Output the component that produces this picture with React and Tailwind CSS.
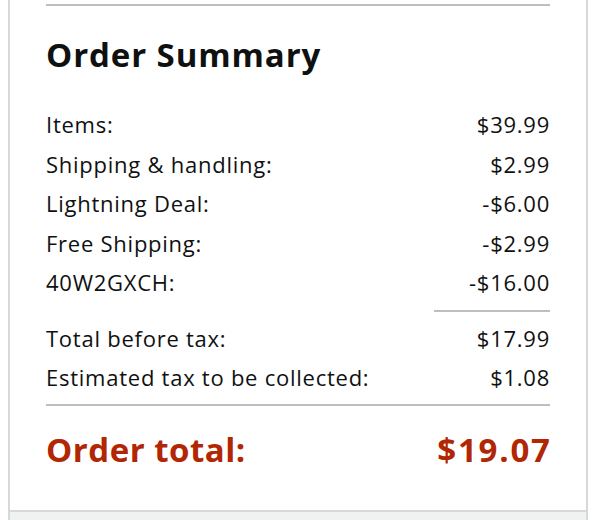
export default function App() {
  const rows1 = [
    ["Items:", "$39.99"],
    ["Shipping & handling:", "$2.99"],
    ["Lightning Deal:", "-$6.00"],
    ["Free Shipping:", "-$2.99"],
    ["40W2GXCH:", "-$16.00"],
  ];
  const rows2 = [
    ["Total before tax:", "$17.99"],
    ["Estimated tax to be collected:", "$1.08"],
  ];
  return (
    <div className="w-[600px] h-[520px] bg-white overflow-hidden text-[#0f1111]" style={{ fontFamily: '"Open Sans", "Noto Sans", sans-serif' }}>
      <div className="ml-[8px] w-[580px] h-[520px] border-x-2 border-[#d5d9d9] flex flex-col">
        <div className="px-[36px] pt-[4px] flex flex-col h-[510px]">
          <div className="border-t-2 border-[#bbbfbf]" />
          <div className="h-[100px] flex items-center pb-[4px]">
            <h2 className="text-[33px] font-bold leading-none tracking-[0.9px]">Order Summary</h2>
          </div>
          {rows1.map(([l, v]) => (
            <div key={l} className="h-[39.5px] flex items-center justify-between text-[22px] leading-none tracking-[0.75px] pb-[3px]">
              <span>{l}</span>
              <span>{v}</span>
            </div>
          ))}
          <div className="flex justify-end mt-[6.5px]">
            <div className="w-[116px] border-t-2 border-[#bbbfbf]" />
          </div>
          <div className="mt-[7.25px]">
            {rows2.map(([l, v]) => (
              <div key={l} className="h-[39.5px] flex items-center justify-between text-[22px] leading-none tracking-[0.75px] pb-[3px]">
                <span>{l}</span>
                <span>{v}</span>
              </div>
            ))}
          </div>
          <div className="mt-[5.75px] border-t-2 border-[#bbbfbf]" />
          <div className="h-[88px] flex items-center justify-between text-[#b12704] text-[33px] font-bold leading-none pb-[2px]">
            <span className="tracking-[0.5px]">Order total:</span>
            <span className="tracking-[1.8px] -mr-[1.8px]">$19.07</span>
          </div>
        </div>
        <div className="flex-1 border-t-2 border-[#d5d9d9] bg-[#f0f2f2]" />
      </div>
    </div>
  );
}
